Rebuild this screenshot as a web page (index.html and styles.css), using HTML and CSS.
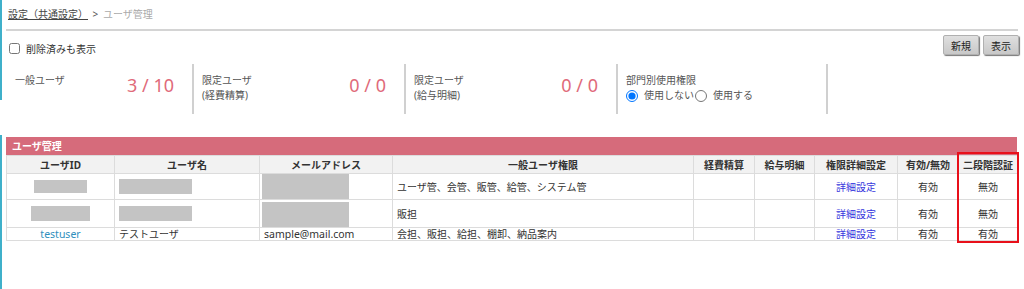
FILE: index.html
```html
<!DOCTYPE html>
<html lang="ja">
<head>
<meta charset="UTF-8">
<meta name="viewport" content="width=device-width, initial-scale=1.0">
<title>ユーザ管理</title>
<link rel="stylesheet" href="styles.css">
</head>
<body>

<div class="page">
  <div class="crumb">
    <a href="#" class="crumb-link">設定（共通設定）</a>
    <span class="crumb-sep">&gt;</span>
    <span class="crumb-current">ユーザ管理</span>
  </div>
  <div class="rule"></div>

  <div class="toolbar">
    <label class="check"><input type="checkbox">削除済みも表示</label>
    <div class="buttons">
      <button class="btn">新規</button>
      <button class="btn">表示</button>
    </div>
  </div>

  <div class="stats">
    <div class="stat first">
      <div class="stat-label">一般ユーザ</div>
      <div class="stat-num">3 / 10</div>
    </div>
    <div class="stat">
      <div class="stat-label">限定ユーザ<br>(経費精算)</div>
      <div class="stat-num">0 / 0</div>
    </div>
    <div class="stat">
      <div class="stat-label">限定ユーザ<br>(給与明細)</div>
      <div class="stat-num">0 / 0</div>
    </div>
    <div class="stat last">
      <div class="stat-label">
        部門別使用権限
        <div class="radios">
          <label class="radio"><input type="radio" name="dept" checked>使用しない</label>
          <label class="radio"><input type="radio" name="dept">使用する</label>
        </div>
      </div>
    </div>
  </div>

  <div class="list">
    <div class="list-title">ユーザ管理</div>
    <table class="users">
      <colgroup>
        <col style="width:108px">
        <col style="width:145px">
        <col style="width:133px">
        <col style="width:301px">
        <col style="width:61px">
        <col style="width:60px">
        <col style="width:83px">
        <col style="width:61px">
        <col style="width:59px">
      </colgroup>
      <tr>
        <th>ユーザID</th>
        <th>ユーザ名</th>
        <th>メールアドレス</th>
        <th>一般ユーザ権限</th>
        <th>経費精算</th>
        <th>給与明細</th>
        <th>権限詳細設定</th>
        <th>有効/無効</th>
        <th>二段階認証</th>
      </tr>
      <tr>
        <td class="center"><span class="mask id-a"></span></td>
        <td><span class="mask name"></span></td>
        <td><span class="mask mail"></span></td>
        <td>ユーザ管、会管、販管、給管、システム管</td>
        <td></td>
        <td></td>
        <td class="center"><a href="#" class="detail">詳細設定</a></td>
        <td class="center">有効</td>
        <td class="center">無効</td>
      </tr>
      <tr>
        <td class="center"><span class="mask id-b"></span></td>
        <td><span class="mask name"></span></td>
        <td><span class="mask mail mail-b"></span></td>
        <td>販担</td>
        <td></td>
        <td></td>
        <td class="center"><a href="#" class="detail">詳細設定</a></td>
        <td class="center">有効</td>
        <td class="center">無効</td>
      </tr>
      <tr class="short">
        <td class="center"><a href="#" class="user-link latin">testuser</a></td>
        <td>テストユーザ</td>
        <td class="latin">sample@mail.com</td>
        <td>会担、販担、給担、棚卸、納品案内</td>
        <td></td>
        <td></td>
        <td class="center"><a href="#" class="detail">詳細設定</a></td>
        <td class="center">有効</td>
        <td class="center">有効</td>
      </tr>
    </table>
    <div class="highlight"></div>
  </div>
</div>

</body>
</html>
```

FILE: styles.css
```css
body {
  margin: 0;
  font-family: "Noto Sans", "Noto Sans CJK JP", sans-serif;
  font-size: 10px;
  color: #333;
  background-color: #fff;
}
.page {
  min-height: 289px;
  background:
    linear-gradient(#3fb0ca, #3fb0ca) 0 0 / 2px 100px no-repeat,
    linear-gradient(#3fb0ca, #3fb0ca) 0 135px / 2px 100% no-repeat;
}
.crumb {
  padding: 7px 8px 0 8px;
  line-height: 14px;
  height: 14px;
}
.crumb-link {
  color: #444;
  text-decoration: underline;
}
.crumb-sep {
  color: #555;
  margin: 0 2px;
}
.crumb-current {
  color: #aaa;
}
.rule {
  margin: 8px 6px 0 6px;
  height: 2px;
  background-color: #d4d4d4;
}
.toolbar {
  display: flex;
  justify-content: space-between;
  height: 25px;
  padding: 0 5px 0 9px;
}
.check {
  display: flex;
  align-items: center;
  margin-top: 11px;
  height: 12px;
}
.check input {
  width: 11px;
  height: 11px;
  margin: 0 6px 0 0;
}
.buttons {
  display: flex;
  gap: 4px;
  margin-top: 4px;
}
.btn {
  width: 36px;
  height: 20px;
  padding: 0;
  font-family: inherit;
  font-size: 10px;
  color: #222;
  background: linear-gradient(#e0e0e0, #c8c8c8);
  border: 1px solid #b0b0b0;
  border-radius: 2px;
  box-shadow: 1px 1px 1px #777;
  cursor: pointer;
}
.stats {
  display: flex;
  margin: 8px 0 0 5px;
}
.stat {
  box-sizing: border-box;
  width: 212px;
  height: 50px;
  padding: 9px 18px 0 8px;
  border-left: 2px solid #d0d0d0;
  display: flex;
  justify-content: space-between;
  align-items: flex-start;
}
.stat.first {
  width: 187px;
  border-left: none;
  padding-left: 10px;
}
.stat.last {
  width: 212px;
  border-right: 2px solid #d0d0d0;
}
.stat-label {
  line-height: 15px;
  color: #555;
}
.stat-num {
  margin-top: 2px;
  font-size: 18px;
  line-height: 20px;
  color: #e06a7a;
}
.radios {
  display: flex;
  align-items: center;
}
.radio {
  display: flex;
  align-items: center;
  margin-right: 1px;
}
.radio input {
  width: 12px;
  height: 12px;
  margin: 0 6px 0 0;
}
.list {
  position: relative;
  margin: 23px 0 0 6px;
  width: 1011px;
}
.list-title {
  height: 18px;
  line-height: 18px;
  padding-left: 6px;
  background-color: #d66b7b;
  color: #fff;
  font-weight: bold;
}
.users {
  width: 1011px;
  table-layout: fixed;
  border-collapse: collapse;
}
.users th,
.users td {
  border: 1px solid #dcdcdc;
  padding: 0 4px;
  line-height: 12px;
  white-space: nowrap;
  overflow: hidden;
}
.users th {
  height: 17px;
  background-color: #f2f2f2;
  font-weight: bold;
  color: #333;
}
.users td {
  vertical-align: middle;
}
.users .center {
  text-align: center;
}
.latin {
  font-size: 10.5px;
}
.mask {
  display: inline-block;
  vertical-align: middle;
  background-color: #c4c4c4;
}
.id-a {
  width: 53px;
  height: 13px;
}
.id-b {
  width: 59px;
  height: 15px;
}
.name {
  width: 73px;
  height: 15px;
}
.mail {
  width: 87px;
  height: 25px;
  margin-left: -2px;
}
.mail-b {
  margin-top: 2px;
}
.user-link {
  color: #2f8fbd;
  text-decoration: none;
}
.detail {
  color: #3535dd;
  text-decoration: none;
}
.highlight {
  position: absolute;
  left: 951px;
  top: 15px;
  width: 58px;
  height: 87px;
  border: 2px solid #e8101a;
}
```
